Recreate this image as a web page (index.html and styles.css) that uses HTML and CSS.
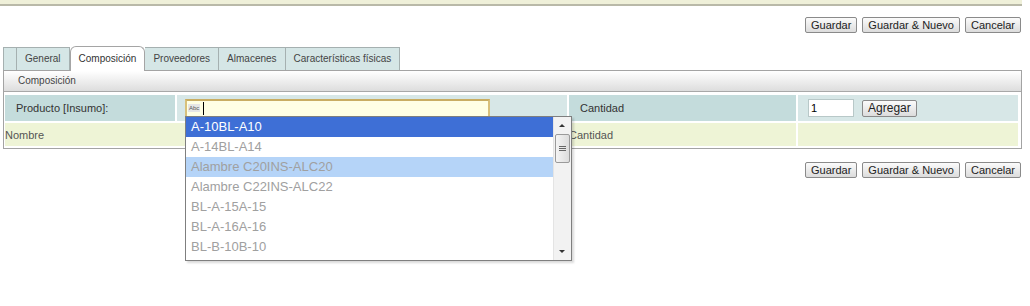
FILE: index.html
```html
<!DOCTYPE html>
<html lang="es">
<head>
    <meta charset="UTF-8">
    <title>Insumo - Composición</title>
    <link rel="stylesheet" href="styles.css">
</head>
<body>

<div class="topbar"></div>

<div class="actions">
    <button class="btn">Guardar</button>
    <button class="btn">Guardar &amp; Nuevo</button>
    <button class="btn">Cancelar</button>
</div>

<div class="tabs">
    <span class="tab tab-blank"></span>
    <span class="tab">General</span>
    <span class="tab active">Composición</span>
    <span class="tab">Proveedores</span>
    <span class="tab">Almacenes</span>
    <span class="tab">Características físicas</span>
</div>

<div class="panel">
    <div class="panel-head">Composición</div>
    <table class="grid">
        <tr class="row-edit">
            <td class="lbl c1">Producto [Insumo]:</td>
            <td class="fld c2">
                <div class="combo">
                    <div class="combo-input"><span class="abc">Abc</span><span class="caret"></span></div>
                    <div class="dropdown">
                        <ul class="items">
                            <li class="sel">A-10BL-A10</li>
                            <li>A-14BL-A14</li>
                            <li class="hover">Alambre C20INS-ALC20</li>
                            <li>Alambre C22INS-ALC22</li>
                            <li>BL-A-15A-15</li>
                            <li>BL-A-16A-16</li>
                            <li>BL-B-10B-10</li>
                        </ul>
                        <div class="scroll">
                            <span class="arrow up"></span>
                            <span class="thumb"><i></i><i></i><i></i></span>
                            <span class="arrow down"></span>
                        </div>
                    </div>
                </div>
            </td>
            <td class="lbl c3">Cantidad</td>
            <td class="fld c4">
                <input class="qty" type="text" value="1">
                <button class="btn add">Agregar</button>
            </td>
        </tr>
        <tr class="row-head">
            <td colspan="2">Nombre</td>
            <td>Cantidad</td>
            <td></td>
        </tr>
    </table>
</div>

<div class="actions bottom">
    <button class="btn">Guardar</button>
    <button class="btn">Guardar &amp; Nuevo</button>
    <button class="btn">Cancelar</button>
</div>

</body>
</html>
```

FILE: styles.css
```css
html { height: 100%; }
body { margin: 0; min-height: 306px; font-family: "Liberation Sans", Arial, sans-serif; font-size: 11px; color: #333; background: #fff; }
.topbar { height: 4px; width: 1022px; background: #eff0d9; border-bottom: 2px solid #b9b9a8; }

.actions { display: flex; justify-content: flex-end; gap: 5px; padding-right: 9px; margin-top: 11px; }
.actions.bottom { margin-top: 13px; }
.btn { height: 16px; padding: 0 5px; font-family: inherit; font-size: 11px; color: #222; background: linear-gradient(#fbfbfb, #dcdcdc); border: 1px solid #8a8a8a; border-radius: 2px; line-height: 13px; }

.tabs { display: flex; align-items: flex-end; margin: 12px 0 0 3px; height: 25px; }
.tab { height: 22px; line-height: 22px; padding: 0 8px; font-size: 10px; background: #d5e6e6; border: 1px solid #a5b0b0; border-bottom: none; border-left: none; color: #444; }
.tab-blank { width: 12px; padding: 0; border-left: 1px solid #a5b0b0; }
.tab.active { height: 24px; line-height: 24px; background: #fff; border: 1px solid #a5a5a5; border-bottom: none; border-radius: 6px 6px 0 0; margin-bottom: -1px; position: relative; color: #333; }

.panel { margin-left: 3px; width: 1017px; border: 1px solid #a3a3a3; }
.panel-head { height: 20px; line-height: 20px; padding-left: 14px; font-size: 10px; background: linear-gradient(#fff, #ddd); border-bottom: 1px solid #a8a8a8; color: #444; }

.grid { width: 1017px; border-collapse: separate; border-spacing: 2px 2px; margin: 1px 0 0 -1px; table-layout: fixed; }
.grid td { padding: 0; }
.row-edit td { height: 26px; }
.row-head td { height: 23px; background: #eef4d6; color: #555; }
.lbl { background: #c4dcdc; color: #333; padding-left: 11px !important; }
.fld { background: #d7e7e7; }
.c1 { width: 159px; }
.c2 { width: 390px; }
.c3 { width: 216px; }
.c4 { padding-left: 10px !important; }

.combo { position: relative; margin-left: 8px; width: 305px; }
.combo-input { display: flex; align-items: center; height: 15px; background: #ffffe4; border: 2px solid #d8c07a; border-top-color: #c9ad62; }
.abc { font-size: 6px; line-height: 8px; color: #555; background: #e6e6e6; margin-left: 1px; padding: 0 1px; }
.caret { width: 1px; height: 13px; background: #000; margin-left: 3px; }

.dropdown { position: absolute; left: 0; top: 17px; width: 385px; height: 143px; display: flex; background: #fff; border: 1px solid #7f7f7f; box-shadow: 2px 2px 2px rgba(0, 0, 0, 0.15); z-index: 2; }
.items { list-style: none; margin: 0; padding: 0; flex: 1; }
.items li { height: 20px; line-height: 20px; padding-left: 5px; font-family: "Liberation Sans", Arial, sans-serif; font-size: 13px; color: #a0a0a0; }
.items li.sel { background: #3e6fd6; color: #fff; }
.items li.hover { background: #b5d4f8; }

.scroll { width: 17px; position: relative; background: #f2f2f2; border-left: 1px solid #e4e4e4; }
.arrow { position: absolute; left: 5px; width: 0; height: 0; border-left: 3px solid transparent; border-right: 3px solid transparent; }
.arrow.up { top: 7px; border-bottom: 3px solid #333; }
.arrow.down { bottom: 7px; border-top: 3px solid #333; }
.thumb { position: absolute; left: 1px; top: 17px; width: 13px; height: 27px; background: linear-gradient(90deg, #f4f4f4, #dcdcdc); border: 1px solid #9a9a9a; border-radius: 2px; display: flex; flex-direction: column; justify-content: center; align-items: center; gap: 1px; }
.thumb i { display: block; width: 7px; height: 1px; background: #666; }

.qty { width: 40px; height: 14px; padding: 1px 2px; border: 1px solid #b8c8c8; font-family: inherit; font-size: 11px; vertical-align: middle; }
.add { margin-left: 5px; vertical-align: middle; height: 17px; padding: 0 5px; font-size: 12px; }
```
